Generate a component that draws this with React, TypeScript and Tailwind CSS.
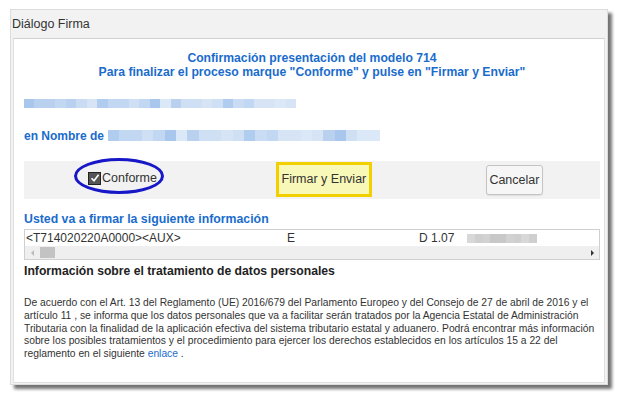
import React from "react";

const blue1 = ["#c9dcf3", "#b9d1ef", "#d6e4f6", "#a9c7ec", "#c2d7f2", "#dbe8f7", "#b0ccee", "#cfe0f5"];

function Pixels({ w, h, n, colors, seed }: { w: number; h: number; n: number; colors: string[]; seed: number }) {
  const cells = Array.from({ length: n }, (_, i) => colors[(i * 5 + seed * 3 + ((i * i) % 7)) % colors.length]);
  return (
    <div className="flex" style={{ width: w, height: h }}>
      {cells.map((c, i) => (
        <div key={i} className="flex-1 h-full" style={{ background: c }} />
      ))}
    </div>
  );
}

export default function App() {
  const f = { fontFamily: '"Liberation Sans", Arial, sans-serif' };
  return (
    <div className="w-[621px] h-[397px] bg-white pl-[10px] pt-[9px]" style={f}>
      <div className="w-[598px] h-[376px] bg-[#f2f2f2] border border-[#dcdcdc] shadow-[4px_4px_3px_rgba(0,0,0,0.55)] flex flex-col">
        <div className="h-[28px] flex items-center pl-[1px] text-[12.5px] text-[#333]">Diálogo Firma</div>
        <div className="flex-1 bg-white border-t border-[#d0d0d0] mx-[2px] mb-[1px] border-x border-b border-x-[#e0e0e0] border-b-[#e0e0e0] pl-[10px] pr-[4px]">
          <div className="pt-[12px] text-center text-[#1a6ccc] font-bold text-[12.2px] leading-[14px]">
            <div>Confirmación presentación del modelo 714</div>
            <div>Para finalizar el proceso marque "Conforme" y pulse en "Firmar y Enviar"</div>
          </div>
          <div className="mt-[20px] h-[9px]">
            <Pixels w={272} h={9} n={26} colors={blue1} seed={1} />
          </div>
          <div className="mt-[21px] h-[13px] flex items-center gap-[4px]">
            <span className="text-[#1a6ccc] font-bold text-[12px]">en Nombre de</span>
            <Pixels w={272} h={11} n={24} colors={blue1} seed={2} />
          </div>
          <div className="mt-[19px] h-[38px] bg-[#f2f2f2] relative flex items-start">
            <div className="absolute left-[50px] top-[-3px] w-[90px] h-[36px] rounded-[50%] border-[3px] border-[#1717c8]" />
            <div className="ml-[64px] mt-[8px] flex items-center">
              <div className="w-[13px] h-[13px] bg-[#555] border border-[#222] flex items-center justify-center">
                <svg width="10" height="10" viewBox="0 0 10 10">
                  <path d="M1.5 5.2 L4 7.8 L8.6 1.8" stroke="#fff" strokeWidth="1.6" fill="none" />
                </svg>
              </div>
              <span className="text-[12.5px] text-[#333] ml-[1px]">Conforme</span>
            </div>
            <div className="ml-[119px] mt-[1px] w-[96px] h-[35px] border-[3px] border-[#f2d000] flex items-center justify-center bg-[#f8f8b8]">
              <span className="text-[12.5px] text-[#333]">Firmar y Enviar</span>
            </div>
            <div className="ml-[114px] mt-[4px] w-[57px] h-[30px] rounded-[3px] border border-[#c4c4c4] bg-[#f6f6f6] flex items-center justify-center shadow-[0_1px_1px_rgba(0,0,0,0.08)]">
              <span className="text-[12.5px] text-[#333]">Cancelar</span>
            </div>
          </div>
          <div className="mt-[13px] text-[#1a6ccc] font-bold text-[12.3px] leading-[14px]">Usted va a firmar la siguiente información</div>
          <div className="mt-[3px] h-[31px] border border-[#cfcfcf] flex flex-col">
            <div className="h-[16px] flex items-center text-[12px] text-[#333] pl-[1px] leading-none">
              <span className="w-[261px]">&lt;T714020220A0000&gt;&lt;AUX&gt;</span>
              <span className="w-[132px]">E</span>
              <span className="w-[48px]">D 1.07</span>
              <Pixels w={70} h={9} n={9} colors={["#d8d8d8", "#cfcfcf", "#c8c8c8", "#dedede", "#d2d2d2"]} seed={0} />
            </div>
            <div className="flex-1 bg-[#efefef] flex items-center pl-[6px] pr-[5px]">
              <span className="w-0 h-0 border-y-[3px] border-y-transparent border-r-[3px] border-r-[#bbb]" />
              <span className="ml-[6px] w-[15px] h-[11px] bg-[#c3c3c3]" />
              <span className="ml-auto w-0 h-0 border-y-[3px] border-y-transparent border-l-[3px] border-l-[#333]" />
            </div>
          </div>
          <div className="mt-[4px] text-[#222] font-bold text-[12.2px] leading-[14px]">Información sobre el tratamiento de datos personales</div>
          <div className="mt-[19px] text-[10.3px] leading-[12.8px] text-[#333] whitespace-nowrap">
            <div>De acuerdo con el Art. 13 del Reglamento (UE) 2016/679 del Parlamento Europeo y del Consejo de 27 de abril de 2016 y el</div>
            <div>artículo 11 , se informa que los datos personales que va a facilitar serán tratados por la Agencia Estatal de Administración</div>
            <div>Tributaria con la finalidad de la aplicación efectiva del sistema tributario estatal y aduanero. Podrá encontrar más información</div>
            <div>sobre los posibles tratamientos y el procedimiento para ejercer los derechos establecidos en los artículos 15 a 22 del</div>
            <div>reglamento en el siguiente <span className="text-[#1a6ccc]">enlace</span> .</div>
          </div>
        </div>
      </div>
    </div>
  );
}
